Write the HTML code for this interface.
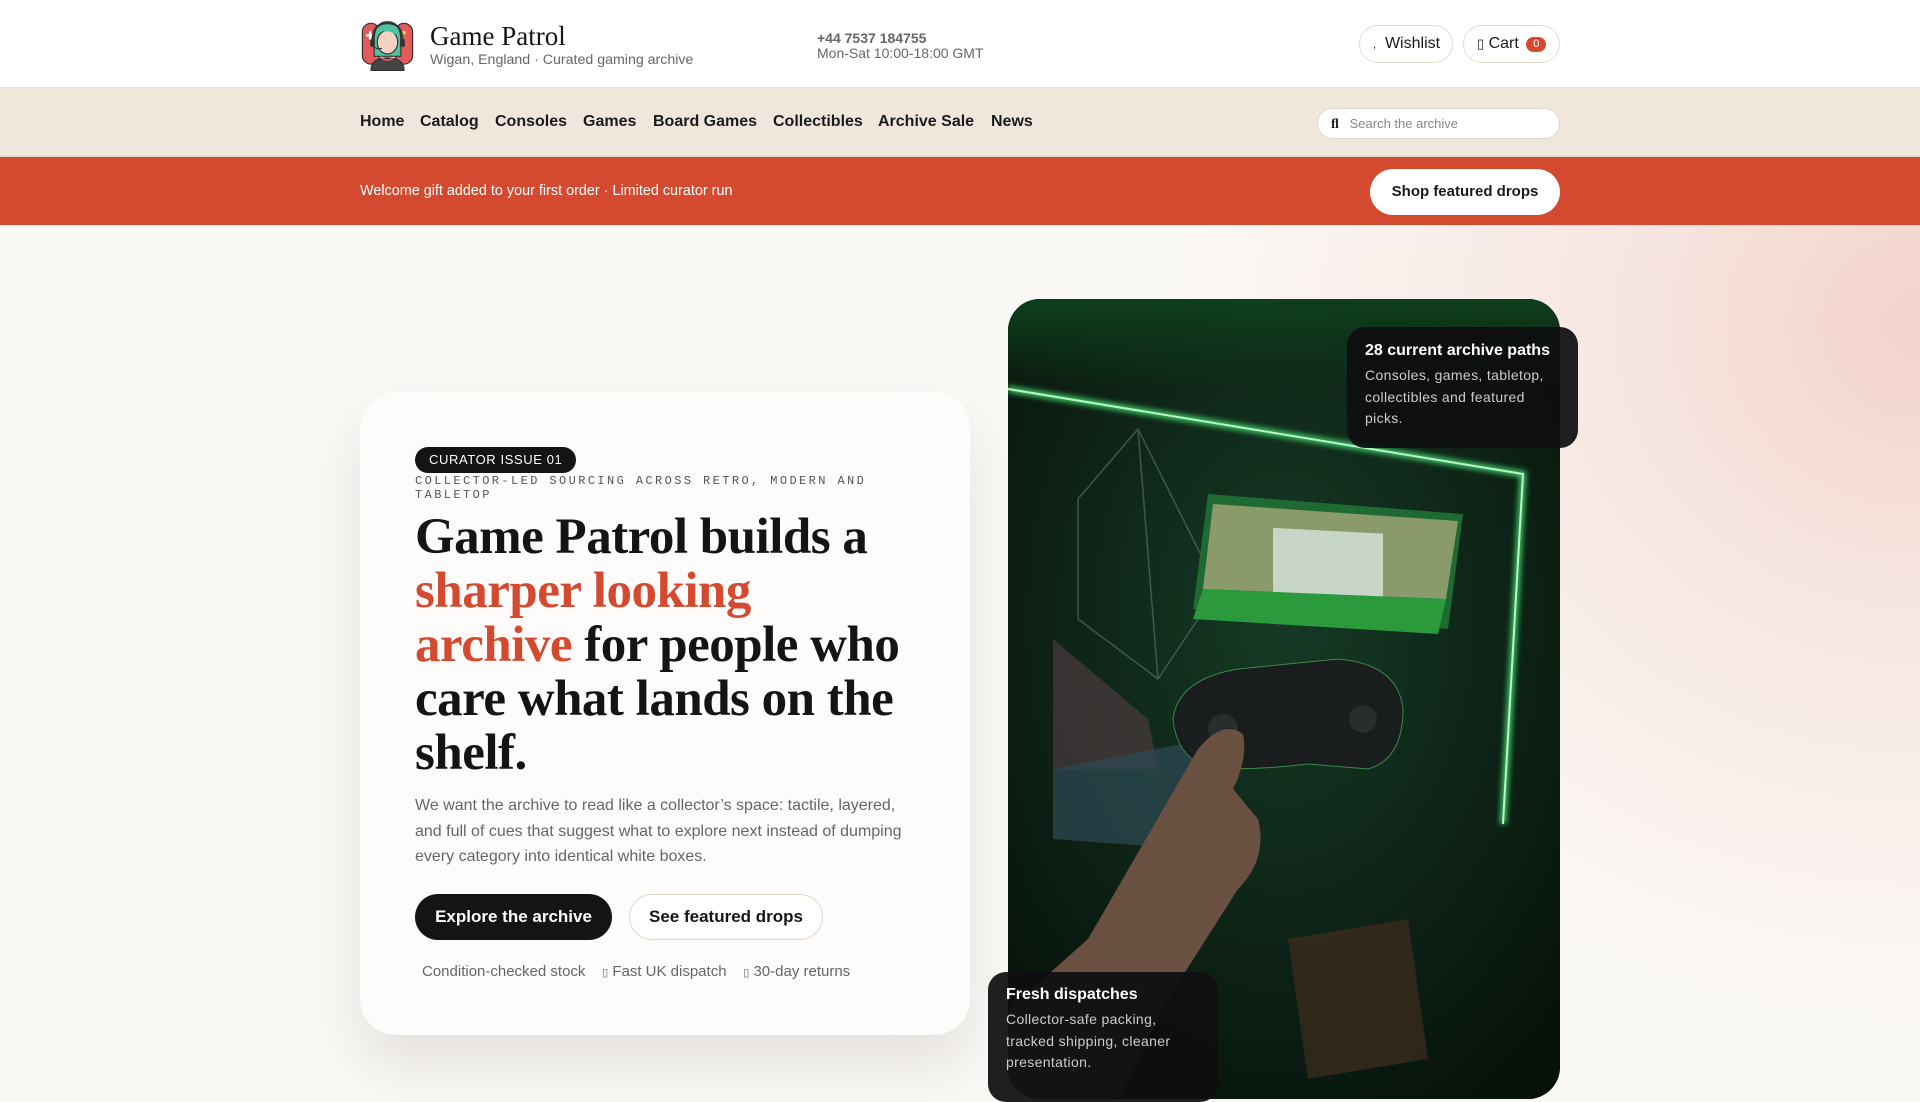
<!DOCTYPE html>
<html><head><meta charset="utf-8"><style>
*{box-sizing:border-box;margin:0;padding:0}
body{width:1920px;height:1080px;overflow:hidden;font-family:"Liberation Sans",sans-serif;background:#fbf9f6;position:relative;color:#161616}
.abs{position:absolute}
header{position:absolute;left:0;top:0;width:1920px;height:88px;background:#fff;border-bottom:1px solid #e6ddd0}
nav{position:absolute;left:0;top:88px;width:1920px;height:69px;background:#efe7dc;border-bottom:1px solid #e0d6c8}
.nav a{position:absolute;top:25px;font-weight:bold;font-size:16px;color:#1b1b1b;text-decoration:none}
.banner{position:absolute;left:0;top:157px;width:1920px;height:68px;background:#d34a31}
.hero{position:absolute;left:0;top:225px;width:1920px;height:855px;background:radial-gradient(ellipse 750px 700px at 1920px 100px,#f3d3cb 0%,rgba(243,211,203,0.5) 40%,rgba(251,249,246,0) 100%),#fbf9f6}
.pill{position:absolute;border:1px solid #e6dccd;border-radius:24px;background:#fff;font-size:16px;color:#1b1b1b}
.card{position:absolute;left:360px;top:392px;width:610px;height:643px;background:#fdfcfa;border-radius:36px;box-shadow:0 30px 60px rgba(60,50,40,0.12)}
.dark{position:absolute;background:rgba(14,14,16,0.93);border-radius:18px;color:#fff}
</style></head><body>
<header>
<svg class="abs" style="left:360px;top:17px" width="55" height="55" viewBox="0 0 70 70">
<rect x="3" y="8" width="22" height="52" rx="11" fill="#e25a5a" stroke="#333" stroke-width="1.5"/>
<rect x="45" y="8" width="22" height="52" rx="11" fill="#e25a5a" stroke="#333" stroke-width="1.5"/>
<rect x="8" y="22" width="10" height="3" fill="#fff"/><rect x="11.5" y="18" width="3" height="11" fill="#fff"/>
<circle cx="56" cy="20" r="2.5" fill="#f5c542"/><circle cx="52" cy="27" r="2.5" fill="#f5c542"/>
<path d="M18 30 Q18 6 35 6 Q52 6 52 30 L52 50 L18 50 Z" fill="#4fc3a1" stroke="#333" stroke-width="1.5"/>
<ellipse cx="35" cy="32" rx="13" ry="15" fill="#f7d2c2" stroke="#333" stroke-width="1.5"/>
<path d="M22 24 Q30 12 48 24 L46 16 Q35 8 24 16Z" fill="#4fc3a1"/>
<path d="M16 30 Q16 8 35 8 Q54 8 54 30" fill="none" stroke="#333" stroke-width="2.5"/>
<rect x="13" y="28" width="6" height="10" rx="2" fill="#333"/><rect x="51" y="28" width="6" height="10" rx="2" fill="#333"/>
<path d="M17 36 Q20 42 28 40" stroke="#333" stroke-width="1.5" fill="none"/>
<path d="M14 68 Q14 52 35 52 Q56 52 56 68Z" fill="#444" stroke="#333" stroke-width="1.5"/>
<path d="M28 52 Q35 58 42 52" stroke="#e25a5a" stroke-width="2" fill="none"/>
</svg>
<div class="abs" style="left:430px;top:21px;font-family:'Liberation Serif',serif;font-size:27px;color:#161616">Game Patrol</div>
<div class="abs" style="left:430px;top:52px;font-size:14.2px;color:#666">Wigan, England · Curated gaming archive</div>
<div class="abs" style="left:817px;top:30px;font-size:14px;font-weight:bold;color:#666">+44 7537 184755</div>
<div class="abs" style="left:817px;top:45px;font-size:14px;color:#666">Mon-Sat 10:00-18:00 GMT</div>
<div class="pill" style="left:1359px;top:25px;width:94px;height:38px;line-height:36px;padding-left:13px"><span style="font-size:11px">,</span>&nbsp; Wishlist</div>
<div class="pill" style="left:1463px;top:25px;width:97px;height:38px;line-height:36px;padding-left:13px"><span style="font-size:13px">▯</span> Cart <span style="display:inline-block;background:#d34a31;color:#fff;font-size:11px;border-radius:9px;width:20px;height:15px;line-height:15px;text-align:center;vertical-align:1px;margin-left:3px">0</span></div>
</header>
<nav class="nav">
<a style="left:360px">Home</a><a style="left:420px">Catalog</a><a style="left:495px">Consoles</a><a style="left:583px">Games</a><a style="left:653px">Board Games</a><a style="left:773px">Collectibles</a><a style="left:878px">Archive Sale</a><a style="left:991px">News</a>
<div class="abs" style="left:1317px;top:20px;width:243px;height:31px;background:#fff;border:1px solid #e3d8c8;border-radius:16px;font-size:13px;color:#888;line-height:29px;padding-left:13px"><b style="font-family:'Liberation Serif',serif;color:#222;font-size:14px">ﬂ</b>&nbsp;&nbsp; Search the archive</div>
</nav>
<div class="banner">
<div class="abs" style="left:360px;top:26px;font-size:14.4px;color:#fff">Welcome gift added to your first order · Limited curator run</div>
<div class="abs" style="left:1370px;top:12px;width:190px;height:46px;background:#fff;border-radius:23px;font-weight:bold;font-size:15px;text-align:center;line-height:46px;color:#1b1b1b">Shop featured drops</div>
</div>
<div class="hero"></div>
<div class="card">
<div class="abs" style="left:55px;top:55px;background:#141414;color:#fff;font-size:13px;letter-spacing:0.6px;border-radius:13px;height:26px;line-height:26px;padding:0 14px">CURATOR ISSUE 01</div>
<div class="abs" style="left:55px;top:82px;width:480px;font-family:'Liberation Mono',monospace;font-size:12px;letter-spacing:2.4px;line-height:14px;color:#555">COLLECTOR-LED SOURCING ACROSS RETRO, MODERN AND TABLETOP</div>
<div class="abs" style="left:55px;top:118px;width:498px;font-family:'Liberation Serif',serif;font-weight:bold;font-size:51px;line-height:54px;color:#141414;letter-spacing:-0.5px">Game Patrol builds a <span style="color:#d34a31">sharper looking archive</span> for people who care what lands on the shelf.</div>
<div class="abs" style="left:55px;top:401px;width:500px;font-size:16px;line-height:25.5px;color:#666">We want the archive to read like a collector’s space: tactile, layered, and full of cues that suggest what to explore next instead of dumping every category into identical white boxes.</div>
<div class="abs" style="left:55px;top:502px;width:197px;height:46px;background:#141414;color:#fff;border-radius:23px;font-weight:bold;font-size:17px;text-align:center;line-height:46px">Explore the archive</div>
<div class="abs" style="left:269px;top:502px;width:194px;height:46px;background:#fff;border:1px solid #e3d8c8;border-radius:23px;font-weight:bold;font-size:17px;text-align:center;line-height:44px">See featured drops</div>
<div class="abs" style="left:62px;top:571px;font-size:15px;color:#666;white-space:nowrap">Condition-checked stock &nbsp;&nbsp; <span style="font-size:11px">▯</span> Fast UK dispatch &nbsp;&nbsp; <span style="font-size:11px">▯</span> 30-day returns</div>
</div>
<div class="abs" style="left:1008px;top:299px;width:552px;height:800px;border-radius:32px;overflow:hidden;background:#0b1a12">
<svg width="552" height="800" viewBox="0 0 552 800">
<defs><radialGradient id="g1" cx="0.5" cy="0.4" r="0.7"><stop offset="0" stop-color="#163a26"/><stop offset="1" stop-color="#07120a"/></radialGradient>
<linearGradient id="tg" x1="0" y1="0" x2="0" y2="1"><stop offset="0" stop-color="#0f3f1c"/><stop offset="1" stop-color="#0f3f1c" stop-opacity="0"/></linearGradient>
<filter id="bl"><feGaussianBlur stdDeviation="3"/></filter></defs>
<rect width="552" height="800" fill="url(#g1)"/>
<rect width="552" height="90" fill="url(#tg)"/>
<path d="M0 90 L515 175 L495 525" stroke="#3fd66a" stroke-width="6" fill="none" filter="url(#bl)"/>
<path d="M0 90 L515 175 L495 525" stroke="#b8f5c6" stroke-width="2" fill="none"/>
<polygon points="45,340 140,420 150,470 45,470" fill="#4a3a3e" opacity="0.7"/>
<polygon points="45,470 200,440 180,550 45,540" fill="#2d4a55" opacity="0.7"/>
<path d="M70 200 L130 130 L210 290 L150 380 L70 320 Z M130 130 L150 380" stroke="#5b7a6a" stroke-width="1.5" fill="none" opacity="0.6"/>
<polygon points="200,195 455,215 440,330 185,310" fill="#1f6a32"/>
<polygon points="205,205 450,222 438,300 195,290" fill="#8a9a6a"/>
<rect x="265" y="215" width="110" height="80" fill="#c8d6c8" transform="skewY(3)"/>
<polygon points="195,290 438,300 430,335 185,320" fill="#2a9a3c"/>
<path d="M165 420 Q170 380 230 370 L330 360 Q390 365 395 410 Q395 460 360 470 L300 465 Q260 470 220 470 Q170 470 165 420Z" fill="#1a1d1e" stroke="#3a8a4a" stroke-width="1"/>
<circle cx="215" cy="430" r="15" fill="#2a2d2e"/><circle cx="355" cy="420" r="14" fill="#2a2d2e"/>
<path d="M-10 720 L80 640 L190 450 Q215 420 235 435 Q240 460 225 490 L250 520 Q260 560 230 590 L160 700 L110 800 L-10 800Z" fill="#6a5040"/>
<path d="M280 640 L400 620 L420 760 L300 780Z" fill="#3a2a1e" opacity="0.8"/>
</svg>
</div>
<div class="dark" style="left:1347px;top:327px;width:231px;height:121px;padding:15px 18px">
<div style="font-weight:bold;font-size:16px">28 current archive paths</div>
<div style="font-size:14px;letter-spacing:0.35px;line-height:21.5px;color:#ccc;margin-top:5px">Consoles, games, tabletop, collectibles and featured picks.</div>
</div>
<div class="dark" style="left:988px;top:972px;width:230px;height:130px;padding:14px 18px">
<div style="font-weight:bold;font-size:16px">Fresh dispatches</div>
<div style="font-size:14px;letter-spacing:0.35px;line-height:21.5px;color:#ccc;margin-top:5px">Collector-safe packing, tracked shipping, cleaner presentation.</div>
</div>
</body></html>
